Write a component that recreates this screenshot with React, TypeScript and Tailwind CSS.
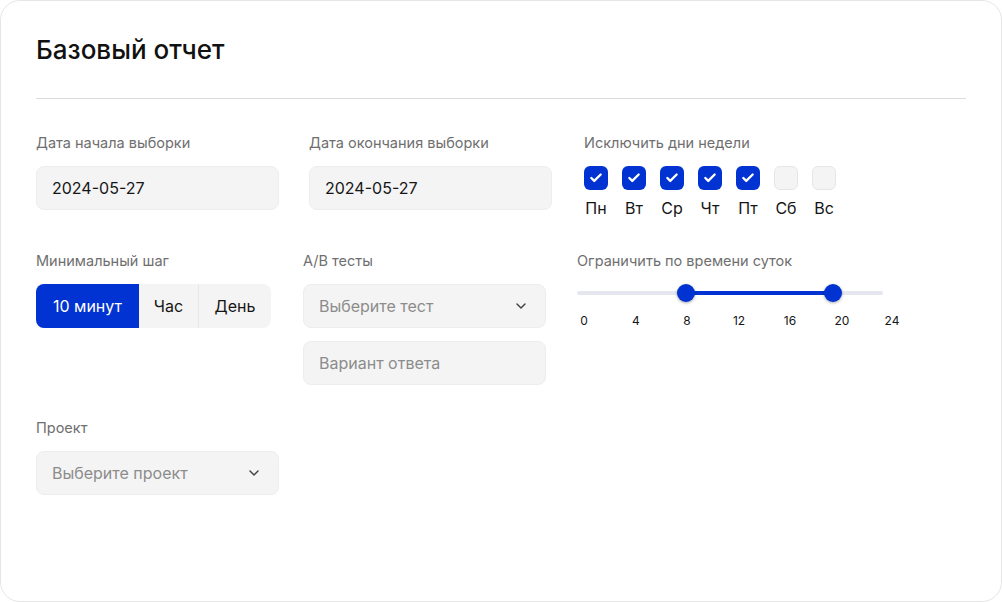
import React from "react";
import { ChevronDown, Check } from "lucide-react";

const days = [
  { label: "Пн", on: true },
  { label: "Вт", on: true },
  { label: "Ср", on: true },
  { label: "Чт", on: true },
  { label: "Пт", on: true },
  { label: "Сб", on: false },
  { label: "Вс", on: false },
];

const ticks = [
  { v: "0", x: 7 },
  { v: "4", x: 59 },
  { v: "8", x: 110 },
  { v: "12", x: 162 },
  { v: "16", x: 213 },
  { v: "20", x: 265 },
  { v: "24", x: 315 },
];

const Label = ({ children }: { children: React.ReactNode }) => (
  <div className="text-[14.5px] leading-5 text-[#6f6f6f]">{children}</div>
);

const Field = ({ children, muted }: { children: React.ReactNode; muted?: boolean }) => (
  <div
    className={`h-11 rounded-lg bg-[#f4f4f4] border border-[#ededed] flex items-center px-[15px] text-[16px] ${
      muted ? "text-[#8c8c8c]" : "text-[#161616]"
    }`}
  >
    {children}
  </div>
);

const Select = ({ placeholder }: { placeholder: string }) => (
  <div className="h-11 rounded-lg bg-[#f4f4f4] border border-[#ededed] flex items-center justify-between pl-[15px] pr-[16px] text-[16px] text-[#8c8c8c]">
    <span>{placeholder}</span>
    <ChevronDown size={16} strokeWidth={2.2} className="text-[#444]" />
  </div>
);

export default function App() {
  return (
    <div className="w-[1002px] h-[602px] bg-white" style={{ fontFamily: "Inter, 'Noto Sans', sans-serif" }}>
      <div className="w-[1002px] h-[602px] rounded-[20px] border border-[#e6e6e6] bg-white px-[35px] pt-[33px]">
        <h1 className="text-[26px] leading-8 font-medium text-[#111]">Базовый отчет</h1>
        <div className="mt-8 h-px bg-[#dcdcdc] w-[930px]" />

        {/* row 1 */}
        <div className="flex mt-[34px]">
          <div className="w-[243px] flex flex-col gap-[13px]">
            <Label>Дата начала выборки</Label>
            <Field>2024-05-27</Field>
          </div>
          <div className="w-[243px] ml-[30px] flex flex-col gap-[13px]">
            <Label>Дата окончания выборки</Label>
            <Field>2024-05-27</Field>
          </div>
          <div className="ml-[32px] flex flex-col gap-[13px]">
            <Label>Исключить дни недели</Label>
            <div className="flex gap-[14px]">
              {days.map((d) => (
                <div key={d.label} className="w-6 flex flex-col items-center gap-[6px]">
                  {d.on ? (
                    <div className="w-6 h-6 rounded-[6px] bg-[#0033d1] flex items-center justify-center">
                      <Check size={14} strokeWidth={4} className="text-white" />
                    </div>
                  ) : (
                    <div className="w-6 h-6 rounded-[6px] bg-[#f4f4f4] border border-[#e6e6e6]" />
                  )}
                  <span className="text-[16px] leading-6 text-[#161616]">{d.label}</span>
                </div>
              ))}
            </div>
          </div>
        </div>

        {/* row 2 */}
        <div className="flex mt-[31px]">
          <div className="w-[243px] flex flex-col gap-[13px]">
            <Label>Минимальный шаг</Label>
            <div className="w-[235px] h-11 rounded-lg bg-[#f4f4f4] flex overflow-hidden text-[16px] text-[#161616]">
              <div className="w-[103px] bg-[#0033d1] text-white flex items-center justify-center">10 минут</div>
              <div className="w-[60px] flex items-center justify-center border-r border-[#e8e8e8]">Час</div>
              <div className="flex-1 flex items-center justify-center">День</div>
            </div>
          </div>
          <div className="w-[243px] ml-[24px] flex flex-col gap-[13px]">
            <Label>A/B тесты</Label>
            <Select placeholder="Выберите тест" />
            <Field muted>Вариант ответа</Field>
          </div>
          <div className="ml-[31px] flex flex-col">
            <Label>Ограничить по времени суток</Label>
            <div className="relative w-[330px] h-[70px]">
              <div className="absolute left-0 top-[20px] w-[306px] h-1 rounded bg-[#e6e6f0]" />
              <div className="absolute left-[109px] top-[20px] w-[147px] h-1 bg-[#0033d1]" />
              <div className="absolute left-[100px] top-[13px] w-[18px] h-[18px] rounded-full bg-[#0033d1] shadow-[0_1px_3px_rgba(0,0,0,0.35)]" />
              <div className="absolute left-[247px] top-[13px] w-[18px] h-[18px] rounded-full bg-[#0033d1] shadow-[0_1px_3px_rgba(0,0,0,0.35)]" />
              {ticks.map((t) => (
                <span
                  key={t.v}
                  className="absolute top-[42px] -translate-x-1/2 text-[12px] leading-4 text-[#161616]"
                  style={{ left: t.x }}
                >
                  {t.v}
                </span>
              ))}
            </div>
          </div>
        </div>

        {/* row 3 */}
        <div className="w-[243px] mt-[33px] flex flex-col gap-[13px]">
          <Label>Проект</Label>
          <Select placeholder="Выберите проект" />
        </div>
      </div>
    </div>
  );
}
